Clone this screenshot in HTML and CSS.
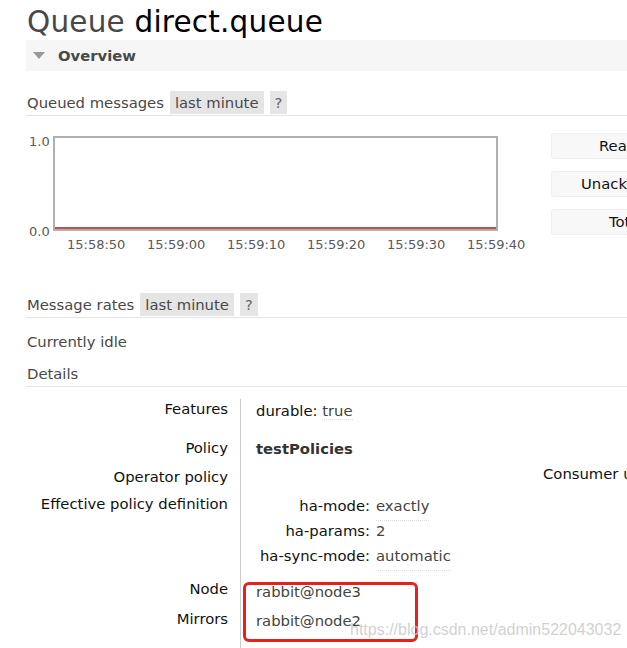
FILE: index.html
```html
<!DOCTYPE html>
<html>
<head>
<meta charset="utf-8">
<link rel="stylesheet" href="styles.css">
</head>
<body>
<div class="page">
  <h1 class="title"><span class="kind">Queue</span> direct.queue</h1>
  <div class="section-head"><span class="tri"></span>Overview</div>

  <div class="sub-head">
    <span>Queued messages</span><span class="pill">last minute</span><span class="pill q">?</span>
  </div>

  <div class="chart-row">
    <div class="chart-area">
      <div class="chart-main">
        <div class="yaxis"><span>1.0</span><span>0.0</span></div>
        <div class="plot"><div class="zero"></div></div>
      </div>
      <div class="xaxis">
        <span>15:58:50</span><span>15:59:00</span><span>15:59:10</span><span>15:59:20</span><span>15:59:30</span><span>15:59:40</span>
      </div>
    </div>
    <div class="legend">
      <div class="lg"><span class="lt1">Ready</span></div>
      <div class="lg"><span class="lt2">Unacked</span></div>
      <div class="lg"><span class="lt3">Total</span></div>
    </div>
  </div>

  <div class="sub-head rates">
    <span>Message rates</span><span class="pill">last minute</span><span class="pill q">?</span>
  </div>
  <div class="idle">Currently idle</div>
  <div class="details-head">Details</div>

  <div class="details">
    <div class="row r-features"><div class="lab">Features</div><div class="val"><span class="k">durable:</span> <span class="v">true</span></div></div>
    <div class="row r-policy"><div class="lab">Policy</div><div class="val bold">testPolicies</div></div>
    <div class="row r-op"><div class="lab">Operator policy</div><div class="val"></div><div class="extra">Consumer u</div></div>
    <div class="row r-eff"><div class="lab">Effective policy definition</div>
      <div class="val">
        <div class="kv"><span class="kk">ha-mode:</span><span class="v">exactly</span></div>
        <div class="kv"><span class="kk">ha-params:</span><span class="v plain">2</span></div>
        <div class="kv"><span class="kk">ha-sync-mode:</span><span class="v">automatic</span></div>
      </div>
    </div>
    <div class="row r-node"><div class="lab">Node</div><div class="val">rabbit@node3</div></div>
    <div class="row r-mir"><div class="lab">Mirrors</div><div class="val">rabbit@node2</div></div>
    <div class="mark"></div>
  </div>
</div>
<div class="watermark">https://blog.csdn.net/admin522043032</div>
</body>
</html>
```
FILE: styles.css
```css
html, body {
  margin: 0;
  padding: 0;
  background: #fff;
  overflow: hidden;
}
body {
  width: 627px;
  height: 648px;
  position: relative;
  font-family: "DejaVu Sans", Verdana, sans-serif;
  font-size: 14.8px;
  color: #484848;
}
.page {
  padding-left: 26px;
}
.title {
  margin: 0;
  padding: 4px 0 0 1px;
  font-weight: normal;
  font-size: 29.5px;
  line-height: 36px;
  color: #000;
  letter-spacing: 0.2px;
}
.title .kind { color: #484848; }
.section-head {
  background: #f6f6f6;
  height: 31px;
  display: flex;
  align-items: center;
  font-weight: bold;
  font-size: 14.8px;
  color: #484848;
  padding-left: 7px;
}
.tri {
  width: 0; height: 0;
  border-left: 6px solid transparent;
  border-right: 6px solid transparent;
  border-top: 7px solid #999;
  margin-right: 13px;
}
.sub-head {
  margin-top: 20px;
  height: 23px;
  display: flex;
  align-items: center;
  border-bottom: 1px solid #e4e4e4;
  padding-bottom: 1px;
  padding-left: 1px;
}
.pill {
  background: #e5e5e5;
  height: 23px;
  line-height: 23px;
  padding: 0 5px;
  margin-left: 6px;
}
.pill.q { padding: 0 5px; color: #666; }
.chart-row {
  display: flex;
  margin-top: 20px;
  height: 124px;
}
.chart-area { width: 525px; flex: none; }
.chart-main { display: flex; height: 97px; align-items: flex-start; }
.yaxis {
  width: 27px;
  height: 102px;
  display: flex;
  flex-direction: column;
  justify-content: space-between;
  font-size: 13px;
  color: #5a5a5a;
  padding-left: 3px;
  box-sizing: border-box;
  line-height: 12px;
}
.plot {
  width: 445px;
  height: 95px;
  border: 2px solid #b0b0b0;
  box-sizing: border-box;
  position: relative;
}
.zero {
  position: absolute;
  left: 0; right: 0; bottom: 0;
  height: 2px;
  background: #cc4c4c;
}
.xaxis {
  display: flex;
  gap: 21px;
  padding-left: 41px;
  margin-top: 4px;
  font-size: 13px;
  color: #5a5a5a;
  white-space: nowrap;
}
.xaxis span { width: 59px; }
.legend {
  display: flex;
  flex-direction: column;
  gap: 12px;
  margin-top: -3px;
  flex: none;
}
.lg {
  width: 120px;
  height: 26px;
  background: #f8f8f8;
  border: 1px solid #eee;
  border-radius: 3px;
  box-sizing: border-box;
  line-height: 24px;
  color: #111;
  white-space: nowrap;
}
.lt1 { padding-left: 47px; }
.lt2 { padding-left: 29px; }
.lt3 { padding-left: 57px; }
.rates { margin-top: 33px; }
.idle { margin-top: 12px; padding-left: 1px; height: 24px; line-height: 24px; }
.details-head {
  margin-top: 8px;
  height: 24px;
  line-height: 24px;
  border-bottom: 1px solid #e4e4e4;
  padding-left: 1px;
}
.details {
  position: relative;
  margin-top: 12px;
  color: #111;
}
.row { display: flex; }
.lab {
  flex: none;
  width: 202px;
  text-align: right;
  padding-right: 12px;
  line-height: 20px;
}
.val {
  border-left: 1px solid #ccc;
  padding-left: 15px;
  line-height: 20px;
  color: #222;
  flex: none;
  width: 276px;
}
.val .k { color: #111; }
.v {
  color: #444;
  border-bottom: 1px dotted #ddd;
}
.v.plain { border-bottom: none; }
.bold { font-weight: bold; color: #333; }
.r-features { height: 39px; }
.r-features .val { padding-top: 2px; }
.r-policy { height: 29px; }
.r-policy .val { padding-top: 1px; }
.r-op { height: 26px; }
.extra { flex: none; margin-left: 11px; color: #111; white-space: nowrap; line-height: 20px; margin-top: -3px; }
.r-eff .lab { padding-top: 1px; }
.r-eff .val { padding-top: 3px; height: 83px; }
.kv { display: flex; height: 25px; }
.kk { width: 114px; text-align: right; color: #111; margin-right: 6px; }
.r-node { height: 30px; }
.r-node .val { padding-top: 3px; }
.r-mir { height: 30px; }
.r-mir .val { padding-top: 2px; height: 40px; }
.r-node .val, .r-mir .val { color: #444; }
.mark {
  position: absolute;
  left: 217px;
  top: 183px;
  width: 175px;
  height: 60px;
  border: 3px solid #e8211d;
  border-radius: 6px;
  box-sizing: border-box;
}
.watermark {
  position: absolute;
  left: 350px;
  top: 621px;
  font-family: "Liberation Sans", Arial, sans-serif;
  font-size: 16px;
  color: rgba(200,200,200,0.85);
  white-space: nowrap;
}
```
